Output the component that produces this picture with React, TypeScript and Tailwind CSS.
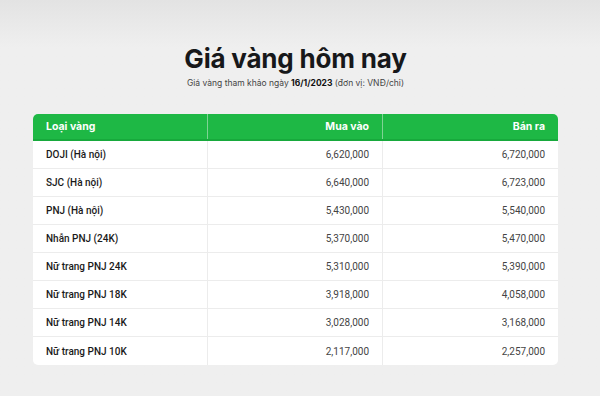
const rows = [
  { name: 'DOJI (Hà nội)', buy: '6,620,000', sell: '6,720,000' },
  { name: 'SJC (Hà nội)', buy: '6,640,000', sell: '6,723,000' },
  { name: 'PNJ (Hà nội)', buy: '5,430,000', sell: '5,540,000' },
  { name: 'Nhẫn PNJ (24K)', buy: '5,370,000', sell: '5,470,000' },
  { name: 'Nữ trang PNJ 24K', buy: '5,310,000', sell: '5,390,000' },
  { name: 'Nữ trang PNJ 18K', buy: '3,918,000', sell: '4,058,000' },
  { name: 'Nữ trang PNJ 14K', buy: '3,028,000', sell: '3,168,000' },
  { name: 'Nữ trang PNJ 10K', buy: '2,117,000', sell: '2,257,000' },
];

export default function App() {
  return (
    <div className="w-[600px] h-[396px] overflow-hidden bg-gradient-to-b from-[#e3e3e3] via-[#efefef] via-[12%] to-[#efefef] font-['Roboto',sans-serif]">
      <div className="w-[525px] ml-[33px] pt-[43px] text-center">
        <h1 className="font-['Inter',sans-serif] font-bold text-[26px] leading-[32px] text-[#17181a] tracking-[-0.2px]">
          Giá vàng hôm nay
        </h1>
        <p className="mt-[2px] font-['Inter',sans-serif] text-[8.5px] leading-[13px] text-[#444]">
          Giá vàng tham khảo ngày <span className="font-bold text-[#111]">16/1/2023</span> (đơn vị: VNĐ/chỉ)
        </p>
      </div>

      <div className="w-[525px] ml-[33px] mt-[24px] rounded-[5px] bg-white overflow-hidden">
        <div className="grid grid-cols-3 h-[27px] bg-[#1eb845] border-b-2 border-[#17a93c] text-white font-['Inter',sans-serif] font-bold text-[10.5px]">
          <div className="flex items-center pl-[13px] border-r border-[#7fd394]">Loại vàng</div>
          <div className="flex items-center justify-end pr-[13px] border-r border-[#7fd394]">Mua vào</div>
          <div className="flex items-center justify-end pr-[13px]">Bán ra</div>
        </div>
        {rows.map((r, i) => (
          <div
            key={r.name}
            className={`grid grid-cols-3 h-[28px] text-[10px] ${i < rows.length - 1 ? 'border-b border-[#ececec]' : ''}`}
          >
            <div className="flex items-center pl-[13px] border-r border-[#ececec] font-medium text-[#1a1a1a]">{r.name}</div>
            <div className="flex items-center justify-end pr-[13px] border-r border-[#ececec] text-[#444]">{r.buy}</div>
            <div className="flex items-center justify-end pr-[13px] text-[#444]">{r.sell}</div>
          </div>
        ))}
      </div>
    </div>
  );
}
